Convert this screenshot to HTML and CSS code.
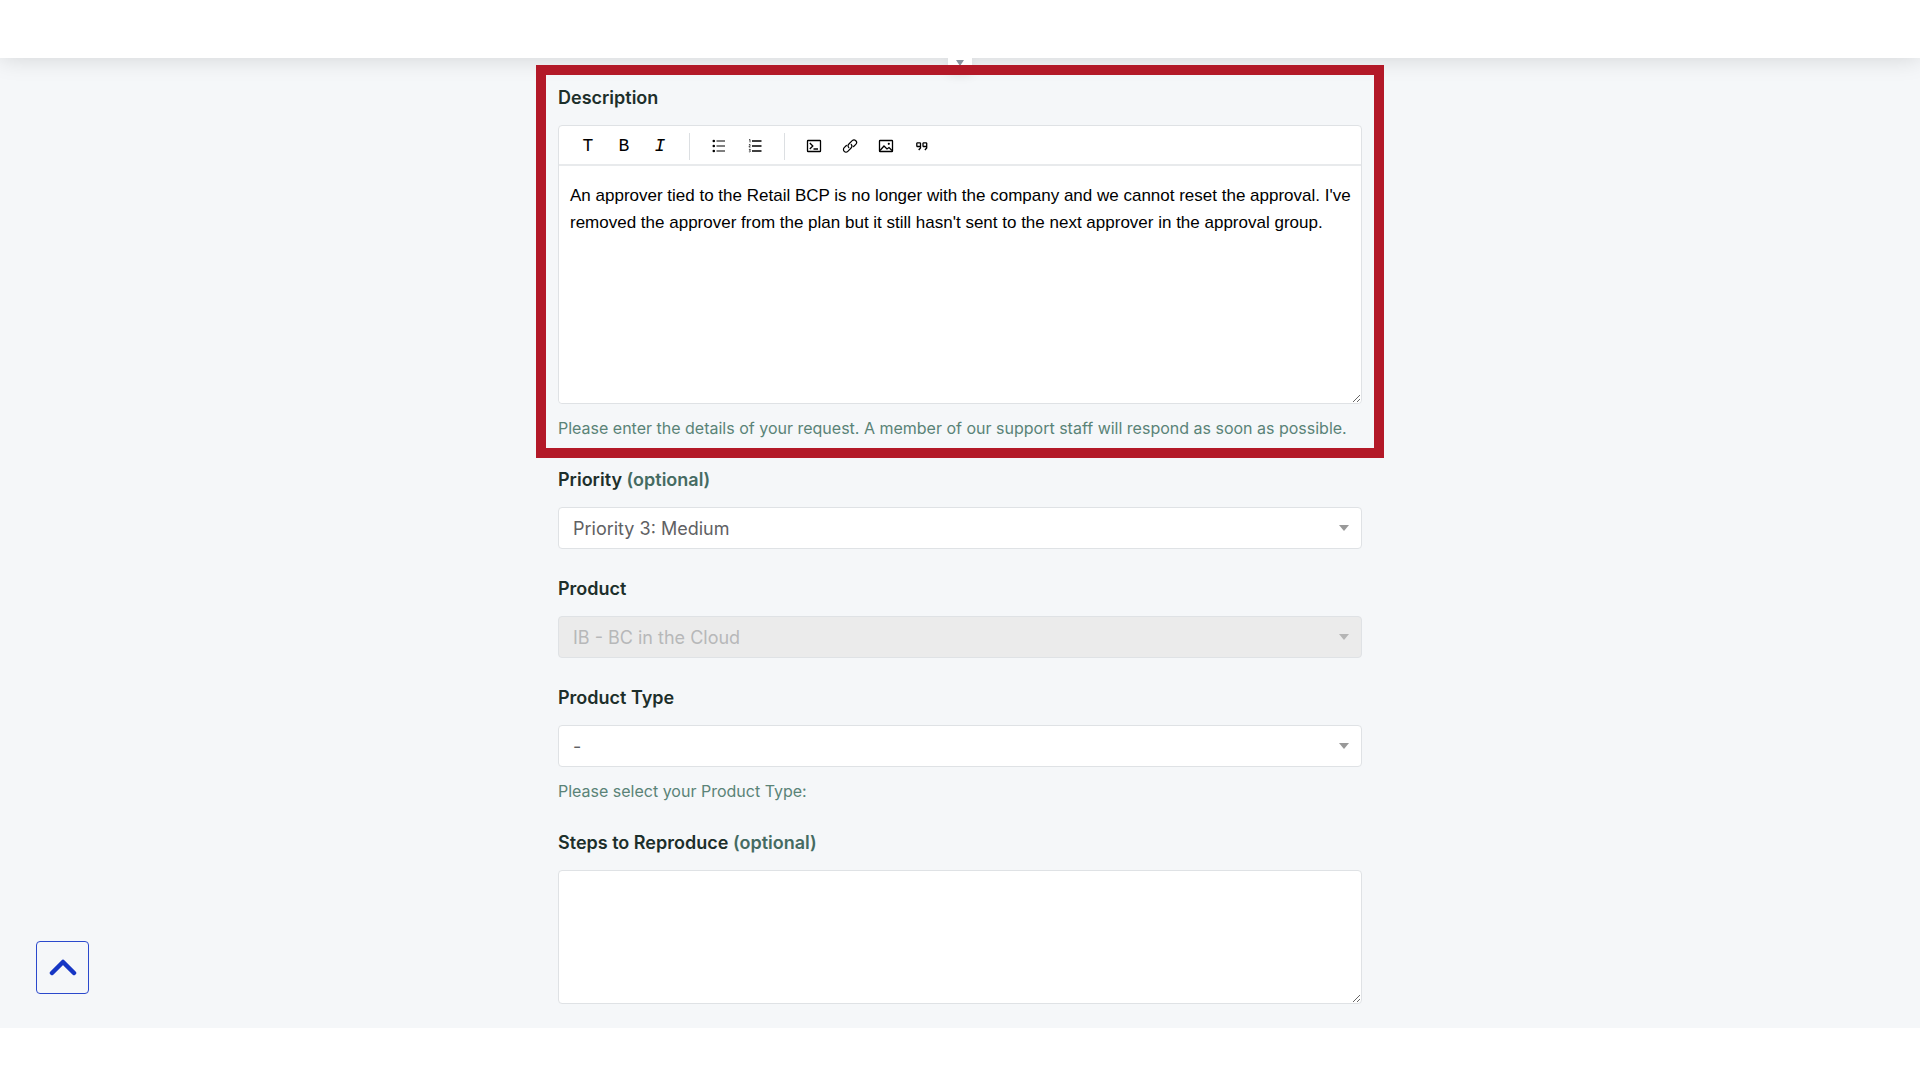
FILE: index.html
```html
<!DOCTYPE html>
<html lang="en">
<head>
    <meta charset="UTF-8">
    <meta name="viewport" content="width=device-width, initial-scale=1.0">
    <title>Submit a request</title>
    <link rel="stylesheet" href="styles.css">
</head>
<body>
    <header class="site-header">
        <button class="header-toggle" type="button" aria-label="Expand header">
            <svg width="8" height="6" viewBox="0 0 8 6"><path d="M0 0h8L4 6z" fill="#8a94a0"/></svg>
        </button>
    </header>

    <main class="page">
        <form class="request-form">
            <div class="highlight">
                <div class="field">
                    <label for="description">Description</label>
                    <div class="editor">
                        <div class="toolbar">
                            <button type="button" aria-label="Text style">T</button>
                            <button type="button" aria-label="Bold">B</button>
                            <button type="button" class="italic" aria-label="Italic">I</button>
                            <span class="separator"></span>
                            <button type="button" aria-label="Bulleted list">
                                <svg width="16" height="16" viewBox="0 0 16 16" fill="none" stroke="currentColor" stroke-width="1.2"><path d="M5.5 3H14M5.5 8H14M5.5 13H14"/><g fill="currentColor" stroke="none"><circle cx="2.8" cy="3" r="1.3"/><circle cx="2.8" cy="8" r="1.3"/><circle cx="2.8" cy="13" r="1.3"/></g></svg>
                            </button>
                            <button type="button" aria-label="Numbered list">
                                <svg width="16" height="16" viewBox="0 0 16 16" fill="none" stroke="currentColor"><path d="M5 3h9.5M5 8h9.5M5 13h9.5" stroke-width="1.4"/><path d="M2 2l1-.6v3M1.9 6.8q1.6-.9 1.3.4L1.9 9h1.7M1.9 11.4h1.500l-.8 1q1.200.1.700 1.100-.6.600-1.400.2" stroke-width=".7"/></svg>
                            </button>
                            <span class="separator"></span>
                            <button type="button" aria-label="Code block">
                                <svg width="16" height="16" viewBox="0 0 16 16" fill="none" stroke="currentColor" stroke-width="1.3"><rect x="1.5" y="2.5" width="13" height="11" rx=".6"/><path d="M3.8 5l3 3-3 3M7.5 11H12"/></svg>
                            </button>
                            <button type="button" aria-label="Link">
                                <svg width="16" height="16" viewBox="0 0 16 16" fill="none" stroke="currentColor" stroke-width="1.2" stroke-linecap="round"><path d="M6.8 9.6A2.6 2.6 0 0 1 6.9 6l3.3-3.3a2.5 2.5 0 0 1 3.6 3.6L11.6 8.5"/><path d="M9.2 6.4a2.6 2.6 0 0 1-.1 3.6l-3.3 3.3a2.5 2.5 0 0 1-3.6-3.6L4.4 7.5"/></svg>
                            </button>
                            <button type="button" aria-label="Image">
                                <svg width="16" height="16" viewBox="0 0 16 16" fill="none" stroke="currentColor" stroke-width="1.3"><rect x="1.5" y="2.5" width="13" height="11" rx=".6"/><path d="M2 12.5l4-4.5 3 3 2-1.5 3 3"/><circle cx="10.8" cy="5.8" r="1.1" fill="currentColor" stroke="none"/></svg>
                            </button>
                            <button type="button" aria-label="Quote">
                                <svg width="16" height="16" viewBox="0 0 16 16" fill="none" stroke="currentColor" stroke-width="1.3"><path d="M6.5 8.500H3.200L2.800 8V5.300l.5-.5h2.700l.5.5V10L4.700 12"/><path d="M12.700 8.500H9.400L9 8V5.300l.5-.5h2.700l.5.5V10L10.900 12"/></svg>
                            </button>
                        </div>
                        <textarea class="editor-body" id="description" spellcheck="false">An approver tied to the Retail BCP is no longer with the company and we cannot reset the approval. I've removed the approver from the plan but it still hasn't sent to the next approver in the approval group.</textarea>
                    </div>
                    <p class="hint">Please enter the details of your request. A member of our support staff will respond as soon as possible.</p>
                </div>
            </div>

            <div class="field">
                <label for="priority">Priority <span class="optional">(optional)</span></label>
                <select id="priority">
                    <option>Priority 3: Medium</option>
                </select>
            </div>

            <div class="field">
                <label for="product">Product</label>
                <select id="product" disabled>
                    <option>IB - BC in the Cloud</option>
                </select>
            </div>

            <div class="field">
                <label for="product-type">Product Type</label>
                <select id="product-type">
                    <option>-</option>
                </select>
                <p class="hint">Please select your Product Type:</p>
            </div>

            <div class="field">
                <label for="steps">Steps to Reproduce <span class="optional">(optional)</span></label>
                <textarea class="steps" id="steps"></textarea>
            </div>
        </form>
    </main>

    <button class="back-to-top" type="button" aria-label="Back to top">
        <svg width="28" height="18" viewBox="0 0 28 18"><path d="M3 14L14 3l11 11" fill="none" stroke="#1636c4" stroke-width="4.5" stroke-linecap="round" stroke-linejoin="round"/></svg>
    </button>
</body>
</html>
```
FILE: styles.css
```css
* {
    box-sizing: border-box;
}

body {
    margin: 0;
    background: #fff;
    color: #1d2f2b;
    font-family: Inter, "Liberation Sans", sans-serif;
    font-size: 18px;
    line-height: 24px;
}

button {
    border: none;
    padding: 0;
    background: none;
    cursor: pointer;
}

/* header */
.site-header {
    position: relative;
    height: 58px;
    background: #fff;
    box-shadow: 0 0 24px rgba(0, 0, 0, 0.15);
}

.header-toggle {
    position: absolute;
    top: 100%;
    left: 50%;
    display: flex;
    justify-content: center;
    width: 24px;
    height: 12px;
    margin-left: -12px;
    padding-top: 2px;
    background: #fff;
    box-shadow: 0 4px 12px rgba(0, 0, 0, 0.1);
    clip-path: inset(0 -20px -20px -20px);
}

/* form */
.page {
    padding: 7px 16px 24px;
    background: #f5f7f9;
}

.request-form {
    display: flex;
    flex-direction: column;
    gap: 28px;
    max-width: 804px;
    margin: 0 auto;
}

.highlight {
    position: relative;
    margin: 0 -22px -18px;
    padding: 11px 12px 8px;
    border: 10px solid #b31928;
}

.field {
    display: flex;
    flex-direction: column;
}

label {
    margin-bottom: 15px;
    font-weight: 600;
}

.optional {
    color: #456b62;
}

.hint {
    margin: 12px 0 0;
    color: #5a8377;
    font-size: 16px;
}

select,
textarea,
.editor {
    width: 100%;
    border: 1px solid #dfe2e5;
    border-radius: 4px;
    background-color: #fff;
}

select {
    height: 42px;
    padding: 0 14px;
    appearance: none;
    background-image: url("data:image/svg+xml,%3Csvg xmlns='http://www.w3.org/2000/svg' width='10' height='6'%3E%3Cpath d='M0 0h10L5 6z' fill='%23999'/%3E%3C/svg%3E");
    background-repeat: no-repeat;
    background-position: right 12px center;
    color: #5f6163;
    font-family: inherit;
    font-size: 18px;
}

select:disabled {
    background-color: #ebebeb;
    background-image: url("data:image/svg+xml,%3Csvg xmlns='http://www.w3.org/2000/svg' width='10' height='6'%3E%3Cpath d='M0 0h10L5 6z' fill='%23b5b5b5'/%3E%3C/svg%3E");
    color: #b7b8b9;
    opacity: 1;
}

textarea {
    display: block;
    resize: vertical;
}

.steps {
    height: 134px;
}

/* description editor */
.toolbar {
    display: flex;
    align-items: center;
    height: 40px;
    padding: 2px 11px 0;
    border-bottom: 2px solid #e8eaec;
}

.toolbar button {
    display: flex;
    align-items: center;
    justify-content: center;
    width: 36px;
    height: 36px;
    color: #000;
    font-family: "Liberation Mono", monospace;
    font-size: 18px;
}

.toolbar .italic {
    font-style: italic;
}

.separator {
    width: 1px;
    height: 27px;
    margin: 0 11px;
    background: #dcdfe2;
}

.editor-body {
    height: 237px;
    padding: 16px 8px 16px 11px;
    border: none;
    color: #000;
    font-family: "Liberation Sans", Arial, sans-serif;
    font-size: 17px;
    line-height: 27px;
}

.back-to-top {
    position: fixed;
    left: 36px;
    bottom: 86px;
    display: flex;
    align-items: center;
    justify-content: center;
    width: 53px;
    height: 53px;
    border: 1px solid #2b49cc;
    border-radius: 4px;
}
```
